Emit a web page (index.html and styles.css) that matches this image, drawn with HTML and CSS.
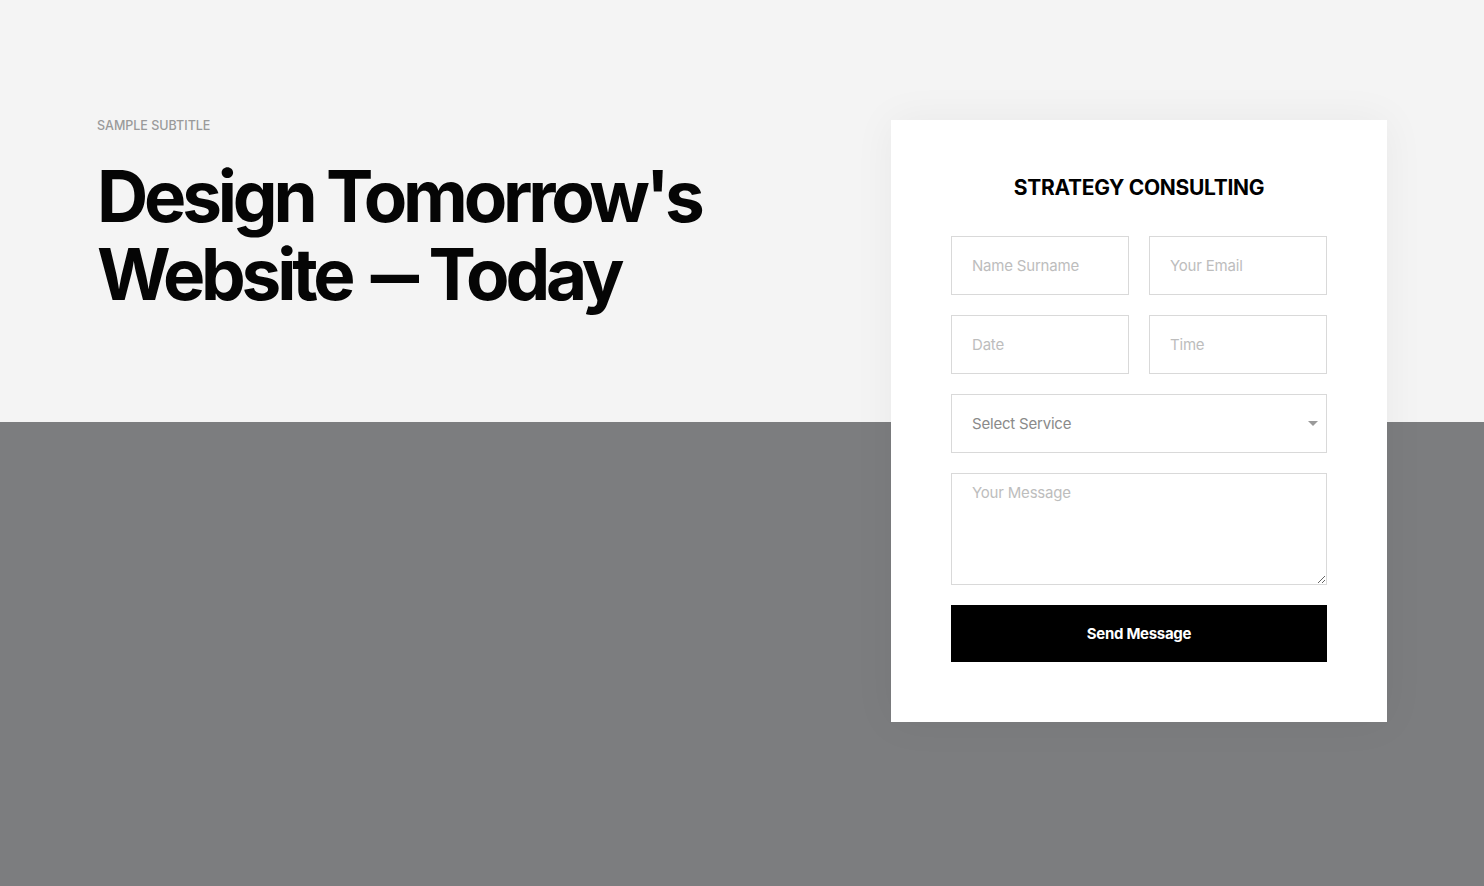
FILE: index.html
```html
<!DOCTYPE html>
<html lang="en">
<head>
<meta charset="utf-8">
<title>Strategy Consulting</title>
<link rel="stylesheet" href="styles.css">
</head>
<body>
<section class="hero">
  <div class="intro">
    <p class="subtitle">SAMPLE SUBTITLE</p>
    <h1 class="headline">Design Tomorrow's<br>Website <span class="dash">—</span> Today</h1>
  </div>
  <form class="card">
    <h2 class="card-title">STRATEGY CONSULTING</h2>
    <div class="row">
      <input class="field" type="text" placeholder="Name Surname">
      <input class="field" type="text" placeholder="Your Email">
    </div>
    <div class="row">
      <input class="field" type="text" placeholder="Date">
      <input class="field" type="text" placeholder="Time">
    </div>
    <div class="select-wrap">
      <select class="field select">
        <option>Select Service</option>
      </select>
    </div>
    <textarea class="field message" placeholder="Your Message"></textarea>
    <button class="send" type="button">Send Message</button>
  </form>
</section>
</body>
</html>
```
FILE: styles.css
```css
* { box-sizing: border-box; }
html, body { margin: 0; padding: 0; }
body {
  font-family: Inter, "Noto Sans", sans-serif;
  background: #7c7d7f;
}
.hero {
  height: 886px;
  display: flex;
  justify-content: space-between;
  align-items: flex-start;
  padding: 120px 97px 0 97px;
  background: linear-gradient(#f4f4f4 0, #f4f4f4 422px, #7c7d7f 422px);
}
.subtitle {
  margin: 0;
  font-size: 12.5px;
  line-height: 12px;
  color: #9a9a9a;
  letter-spacing: 0;
  font-weight: 500;
}
.headline {
  margin: 25px 0 0 0;
  font-size: 71px;
  line-height: 78px;
  font-weight: 700;
  letter-spacing: -4.2px;
  color: #050505;
}
.dash {
  display: inline-block;
  transform: scaleX(0.68);
  margin: 0 -11px 0 -4px;
}
.card {
  width: 496px;
  background: #fff;
  padding: 56px 60px 60px;
  display: flex;
  flex-direction: column;
  gap: 20px;
  box-shadow: 0 0 40px rgba(0,0,0,0.05);
}
.card-title {
  margin: 0 0 16px 0;
  text-align: center;
  font-size: 21px;
  line-height: 24px;
  font-weight: 700;
  letter-spacing: -0.3px;
  color: #000;
}
.row {
  display: flex;
  gap: 20px;
}
.field {
  display: block;
  width: 100%;
  height: 59px;
  border: 1px solid #d9d9d9;
  border-radius: 0;
  background: #fff;
  padding: 0 20px;
  font-family: Inter, "Noto Sans", sans-serif;
  font-size: 15px;
  color: #888;
  outline: none;
  letter-spacing: -0.2px;
}
.field::placeholder { color: #bdbdbd; }
.select-wrap { position: relative; }
.select {
  appearance: none;
  -webkit-appearance: none;
  color: #8a8a8a;
}
.select-wrap::after {
  content: "";
  position: absolute;
  right: 9px;
  top: 27px;
  border-left: 5.5px solid transparent;
  border-right: 5.5px solid transparent;
  border-top: 5.5px solid #9a9a9a;
}
.message {
  height: 112px;
  padding: 9px 20px;
  resize: vertical;
}
.send {
  height: 57px;
  border: 0;
  background: #000;
  color: #fff;
  font-family: Inter, "Noto Sans", sans-serif;
  font-size: 15px;
  font-weight: 700;
  letter-spacing: -0.3px;
  cursor: pointer;
}
```
